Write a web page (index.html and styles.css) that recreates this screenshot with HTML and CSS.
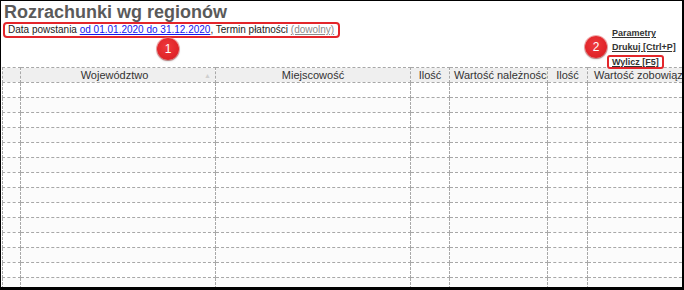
FILE: index.html
```html
<!DOCTYPE html>
<html lang="pl">
<head>
  <meta charset="UTF-8" />
  <title>Rozrachunki wg regionów</title>
  <link rel="stylesheet" href="styles.css">
</head>
<body>
  <div class="frame">
    <div class="top">
      <div class="head">
        <h1 class="title">Rozrachunki wg regionów</h1>
        <div class="info">
          Data powstania <a href="#" class="range">od 01.01.2020 do 31.12.2020</a>, Termin płatności <a href="#" class="any">(dowolny)</a>
        </div>
      </div>
      <div class="actions">
        <a href="#">Parametry</a>
        <a href="#">Drukuj [Ctrl+P]</a>
        <a href="#" class="run">Wylicz [F5]</a>
      </div>
    </div>

    <span class="badge badge-one">1</span>
    <span class="badge badge-two">2</span>

    <table class="grid">
      <colgroup>
        <col style="width:18px">
        <col style="width:195px">
        <col style="width:195px">
        <col style="width:39px">
        <col style="width:98px">
        <col style="width:40px">
        <col style="width:200px">
      </colgroup>
      <thead>
        <tr>
          <th></th>
          <th>Województwo<span class="sort">▲</span></th>
          <th>Miejscowość</th>
          <th>Ilość</th>
          <th>Wartość należności</th>
          <th>Ilość</th>
          <th class="last">Wartość zobowiązań</th>
        </tr>
      </thead>
      <tbody id="rows"></tbody>
    </table>
  </div>

  <script>
    const rows = document.getElementById("rows");
    for (let i = 0; i < 14; i++) {
      rows.innerHTML += "<tr><td></td><td></td><td></td><td></td><td></td><td></td><td></td></tr>";
    }
  </script>
</body>
</html>
```

FILE: styles.css
```css
* { box-sizing: border-box; }

body {
  margin: 0;
  background: #fff;
  font-family: "Liberation Sans", Arial, sans-serif;
}

.frame {
  position: relative;
  width: 684px;
  height: 290px;
  border: 1px solid #000;
  border-right-width: 2px;
  border-bottom-width: 3px;
  overflow: hidden;
  background: #fff;
}

.top {
  display: flex;
  justify-content: space-between;
  height: 66px;
}

.title {
  margin: 0;
  padding: 1px 0 0 3px;
  font-size: 18px;
  line-height: 20px;
  font-weight: bold;
  color: #5a5a5a;
}

.info {
  width: 337px;
  height: 16px;
  margin-left: 2px;
  padding-left: 3px;
  border: 2px solid #e3262b;
  border-radius: 4px;
  font-size: 10px;
  line-height: 12px;
  color: #222;
  white-space: nowrap;
}

.range { color: #1515f0; }
.any { color: #8c8c8c; }

.actions {
  display: flex;
  flex-direction: column;
  align-items: flex-start;
  width: 70px;
  padding-top: 25px;
}

.actions a {
  font-size: 9px;
  line-height: 14px;
  font-weight: bold;
  color: #333;
  white-space: nowrap;
}

.actions .run {
  margin: 1px 0 0 -5px;
  padding: 0 3px 0 3px;
  line-height: 10px;
  border: 2px solid #e3262b;
  border-radius: 3px;
}

.badge {
  position: absolute;
  width: 22px;
  height: 22px;
  border-radius: 50%;
  background: radial-gradient(circle at 45% 40%, #ee3a3d 0%, #e1252a 60%, #d01e24 100%);
  box-shadow: 0 1px 2px rgba(0, 0, 0, 0.35), 0 0 0 1px rgba(240, 120, 120, 0.6);
  color: #fff;
  font-size: 12px;
  line-height: 22px;
  text-align: center;
}

.badge-one { left: 156px; top: 37px; }
.badge-two { left: 584px; top: 35px; }

.grid {
  margin-left: 1px;
  width: 785px;
  table-layout: fixed;
  border-collapse: collapse;
  font-size: 11px;
  color: #333;
}

.grid th,
.grid td {
  border: 1px dashed #a8a8a8;
  padding: 0 4px;
  white-space: nowrap;
  overflow: hidden;
}

.grid th {
  height: 14px;
  padding-top: 1px;
  line-height: 13px;
  font-weight: normal;
  background: #efefef;
  text-align: center;
}

.grid th.last {
  text-align: left;
  padding-left: 6px;
}

.grid td { height: 15px; }

.grid tbody tr:nth-child(odd) td { background: #fff; }
.grid tbody tr:nth-child(even) td { background: #fbfbfb; }

.sort {
  float: right;
  font-size: 7px;
  color: #cfcfcf;
}
```
